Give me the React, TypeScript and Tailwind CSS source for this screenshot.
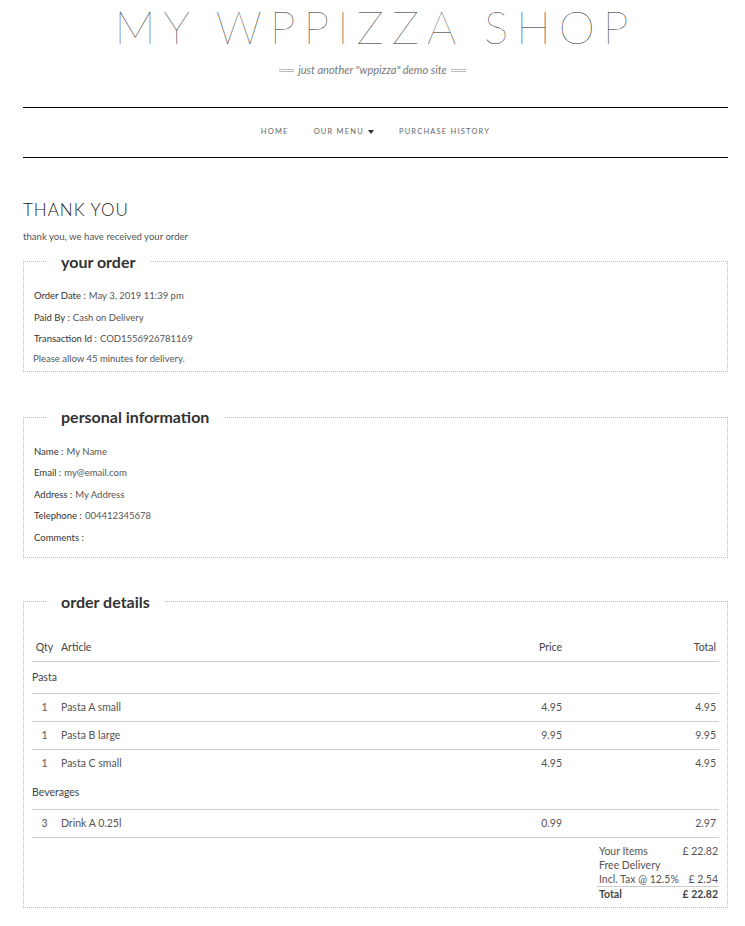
import React from "react";

const lato = { fontFamily: "Lato, 'Open Sans', sans-serif" };

type Item = { qty: number; name: string; price: string; total: string };

const groups: { title: string; items: Item[] }[] = [
  {
    title: "Pasta",
    items: [
      { qty: 1, name: "Pasta A small", price: "4.95", total: "4.95" },
      { qty: 1, name: "Pasta B large", price: "9.95", total: "9.95" },
      { qty: 1, name: "Pasta C small", price: "4.95", total: "4.95" },
    ],
  },
  {
    title: "Beverages",
    items: [{ qty: 3, name: "Drink A 0.25l", price: "0.99", total: "2.97" }],
  },
];

function Info({ label, value }: { label: string; value?: string }) {
  return (
    <div className="flex h-[21.5px] items-center pl-[2px] text-[9.5px] text-[#555]">
      <span className="text-[#333]">{label} :</span>
      {value ? <span className="ml-[3px]">{value}</span> : null}
    </div>
  );
}

function Box({ title, children, className }: { title: string; children: React.ReactNode; className?: string }) {
  return (
    <fieldset className={`border border-dotted border-[#bbb] px-[8px] ${className ?? ""}`}>
      <legend className="ml-[14px] px-[15px] text-[16px] font-bold leading-[20px] text-[#333]">{title}</legend>
      {children}
    </fieldset>
  );
}

export default function App() {
  return (
    <div className="min-h-[926px] bg-white" style={lato}>
      <header className="pt-[3px] text-center">
        <h1 className="pl-[6px] text-[46px] font-thin leading-[48px] tracking-[8px] text-[#222]">MY WPPIZZA SHOP</h1>
        <div className="mt-[11px] flex items-center justify-center gap-[4px] text-[11px] italic text-[#777]">
          <span className="h-[3px] w-[15px] border-y border-[#bbb]" />
          <span>just another "wppizza" demo site</span>
          <span className="h-[3px] w-[15px] border-y border-[#bbb]" />
        </div>
      </header>

      <div className="ml-[23px] w-[705px]">
        <nav className="mt-[28px] flex h-[51px] items-center justify-center gap-[25px] border-y border-black text-[7.5px] uppercase tracking-[1.2px] text-[#666]">
          <span>Home</span>
          <span className="flex items-center gap-[4px]">
            Our Menu
            <svg width="6" height="4" viewBox="0 0 6 4">
              <path d="M0 0h6L3 4z" fill="#333" />
            </svg>
          </span>
          <span>Purchase History</span>
        </nav>

        <h2 className="mt-[40px] text-[17px] font-light leading-[24px] tracking-[1px] text-[#222]">THANK YOU</h2>
        <p className="mt-[8px] text-[9.6px] leading-[14px] text-[#555]">thank you, we have received your order</p>

        <Box title="your order" className="mt-[8px] pb-[2px]">
          <div className="mt-[14px]">
            <Info label="Order Date" value="May 3, 2019 11:39 pm" />
            <Info label="Paid By" value="Cash on Delivery" />
            <Info label="Transaction Id" value="COD1556926781169" />
            <div className="flex h-[19px] items-center pl-[1px] text-[9.5px] text-[#555]">
              Please allow 45 minutes for delivery.
            </div>
          </div>
        </Box>

        <Box title="personal information" className="mt-[35px] pb-[8px]">
          <div className="mt-[14px]">
            <Info label="Name" value="My Name" />
            <Info label="Email" value="my@email.com" />
            <Info label="Address" value="My Address" />
            <Info label="Telephone" value="004412345678" />
            <Info label="Comments" />
          </div>
        </Box>

        <Box title="order details" className="mt-[34px] pb-[6px]">
          <table className="mt-[24px] w-full border-collapse text-[10.5px] text-[#555]">
            <thead>
              <tr className="h-[26px] border-b border-[#ccc] text-[#444]">
                <th className="w-[25px] text-center font-normal">Qty</th>
                <th className="pl-[4px] text-left font-normal">Article</th>
                <th className="w-[100px] pr-[4px] text-right font-normal">Price</th>
                <th className="w-[153px] pr-[3px] text-right font-normal">Total</th>
              </tr>
            </thead>
            <tbody>
              {groups.map((g, gi) => (
                <React.Fragment key={g.title}>
                  <tr className="h-[32px] border-b border-[#ccc]">
                    <td colSpan={4} className="text-[#444]">{g.title}</td>
                  </tr>
                  {g.items.map((it, i) => {
                    const last = i === g.items.length - 1;
                    const border = !last || gi === groups.length - 1;
                    return (
                      <tr key={it.name} className={`h-[28px] ${border ? "border-b border-[#ccc]" : ""}`}>
                        <td className="text-center">{it.qty}</td>
                        <td className="pl-[4px]">{it.name}</td>
                        <td className="pr-[4px] text-right">{it.price}</td>
                        <td className="pr-[3px] text-right">{it.total}</td>
                      </tr>
                    );
                  })}
                </React.Fragment>
              ))}
            </tbody>
          </table>
          <div className="ml-auto mt-[6px] w-[122px] text-[10.5px] leading-[14px] text-[#555]">
            <div className="flex justify-between pl-[2px] pr-[1px]">
              <span>Your Items</span>
              <span>£ 22.82</span>
            </div>
            <div className="pl-[2px]">Free Delivery</div>
            <div className="flex justify-between border-b border-[#ccc] pl-[2px] pr-[1px]">
              <span>Incl. Tax @ 12.5%</span>
              <span>£ 2.54</span>
            </div>
            <div className="flex justify-between pl-[2px] pr-[1px] font-bold text-[#444]">
              <span>Total</span>
              <span>£ 22.82</span>
            </div>
          </div>
        </Box>
      </div>
    </div>
  );
}
